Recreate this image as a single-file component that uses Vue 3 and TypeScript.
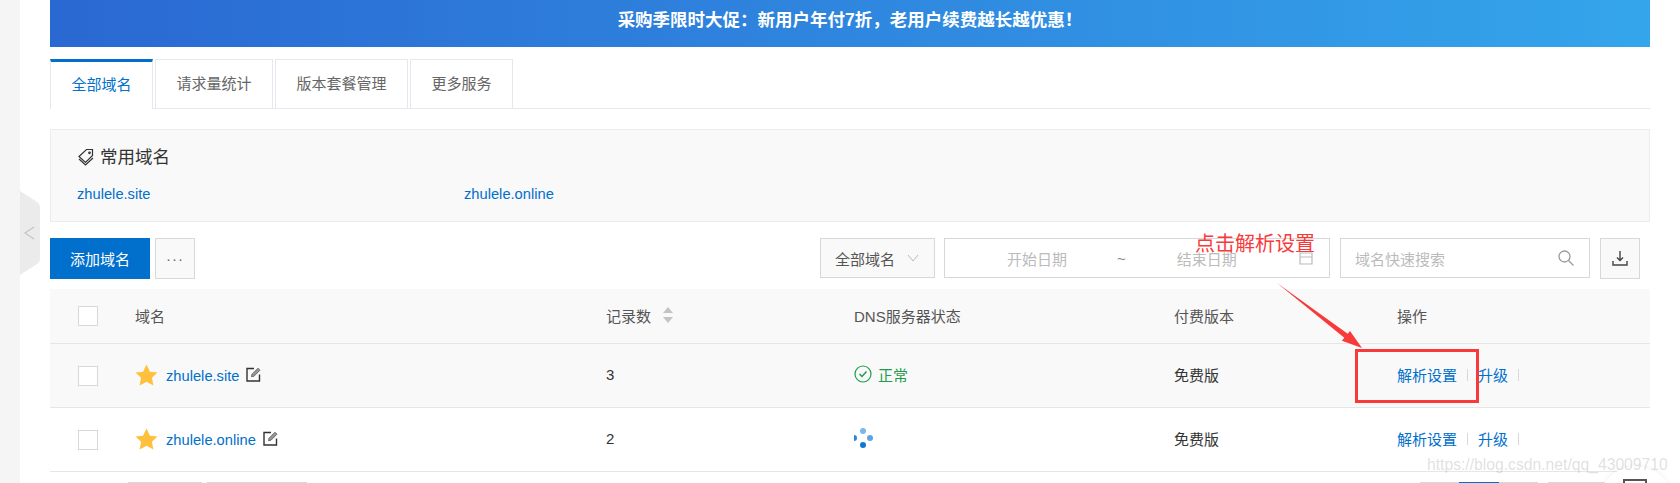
<script setup lang="ts">
interface Row { name: string; count: number; ok: boolean; striped: boolean }
const tabs: string[] = ['全部域名', '请求量统计', '版本套餐管理', '更多服务']
const rows: Row[] = [
  { name: 'zhulele.site', count: 3, ok: true, striped: true },
  { name: 'zhulele.online', count: 2, ok: false, striped: false },
]
</script>

<template>
  <div class="page">
    <aside class="sidebar"></aside>
    <svg class="handle" width="20" height="84" viewBox="0 0 20 84">
      <path d="M0 0L17 11Q20 13 20 17V67Q20 71 17 73L0 84Z" fill="#ebebeb" />
      <path d="M14 36L5 42L14 48" fill="none" stroke="#c4c4c4" stroke-width="1.2" />
    </svg>
    <main class="main">
      <div class="banner">采购季限时大促：新用户年付7折，老用户续费越长越优惠！</div>

      <nav class="tabs">
        <div v-for="(t, i) in tabs" :key="t" class="tab" :class="{ active: i === 0 }">{{ t }}</div>
      </nav>

      <section class="fav">
        <div class="fav-title">
          <svg width="18" height="18" viewBox="0 0 18 18" fill="none" stroke="#333" stroke-width="1.2">
            <path d="M2 8.5L9.5 1.5H15.5V7.5L8.5 14.5Z" />
            <path d="M2 11L8.5 17L16 10" />
            <circle cx="12.5" cy="4.8" r="0.8" />
          </svg>
          <span>常用域名</span>
        </div>
        <div class="fav-links">
          <a class="link domain fav-a">zhulele.site</a>
          <a class="link domain">zhulele.online</a>
        </div>
      </section>

      <div class="toolbar">
        <button class="btn-primary">添加域名</button>
        <button class="btn-more">···</button>
        <div class="spacer"></div>
        <div class="select">
          <span>全部域名</span>
          <svg width="12" height="8" viewBox="0 0 12 8" fill="none" stroke="#bbb" stroke-width="1"><path d="M1 1L6 7L11 1" /></svg>
        </div>
        <div class="date">
          <span class="ph d1">开始日期</span>
          <span class="tilde">~</span>
          <span class="ph d2">结束日期</span>
          <svg class="cal" width="14" height="13" viewBox="0 0 14 13" fill="none" stroke="#bbb" stroke-width="1.2"><path d="M1 1H13V12H1ZM1 5H13" /></svg>
        </div>
        <div class="search">
          <span class="ph">域名快速搜索</span>
          <svg width="18" height="18" viewBox="0 0 18 18" fill="none" stroke="#999" stroke-width="1.3"><circle cx="7.5" cy="7.5" r="5.5" /><path d="M11.5 11.5L16.5 16.5" /></svg>
        </div>
        <button class="btn-down">
          <svg width="16" height="16" viewBox="0 0 16 16" fill="none" stroke="#444" stroke-width="1.4"><path d="M8 1V10M5 7.5L8 10.5L11 7.5M1 11V15H15V11" /></svg>
        </button>
      </div>

      <div class="table">
        <div class="row head">
          <span class="check"></span>
          <span class="lift">域名</span>
          <span class="sort lift">记录数
            <svg width="10" height="16" viewBox="0 0 10 16" fill="#c4c4c4"><path d="M5 0L10 6H0ZM5 16L0 10H10Z" /></svg>
          </span>
          <span class="lift">DNS服务器状态</span>
          <span class="lift">付费版本</span>
          <span class="lift">操作</span>
        </div>
        <div v-for="r in rows" :key="r.name" class="row body" :class="{ striped: r.striped }">
          <span class="check"></span>
          <span class="name">
            <svg class="star" width="23" height="22" viewBox="0 0 24 23"><path d="M12 0.5L15.6 8L23.5 9L17.7 14.5L19.2 22.5L12 18.5L4.8 22.5L6.3 14.5L0.5 9L8.4 8Z" fill="#ffc03d" /></svg>
            <a class="link domain">{{ r.name }}</a>
            <svg class="edit" width="15" height="15" viewBox="0 0 15 15" fill="none" stroke="#333" stroke-width="1.4"><path d="M8 1.5H1V14H13.5V7.5" /><path d="M5.5 9.7L6 7.3L12 1.2L14 3.2L8 9.2Z" fill="#999" stroke="#555" stroke-width="0.8" /></svg>
          </span>
          <span class="num lift">{{ r.count }}</span>
          <span v-if="r.ok" class="ok">
            <svg width="18" height="18" viewBox="0 0 18 18" fill="none" stroke="#1f9d4d" stroke-width="1.2"><circle cx="9" cy="9" r="8" /><path d="M5.5 9L8 11.5L12.5 6.5" stroke-width="1.5" /></svg>
            正常
          </span>
          <span v-else class="dots">
            <i class="dot a"></i><i class="dot b"></i><i class="dot c"></i><i class="dot d"></i>
          </span>
          <span class="cell lift">免费版</span>
          <span class="ops lift">
            <a class="link">解析设置</a><i class="sep"></i><a class="link">升级</a><i class="sep"></i>
          </span>
        </div>
      </div>

      <div class="footer">
        <div class="foot-left"><span class="fb w1"></span><span class="fb w2"></span></div>
        <div class="foot-right"><span class="fb w3"></span><span class="fb blue"></span><span class="fb w3"></span><span class="fb w4"></span></div>
      </div>
    </main>

    <div class="float-circle"><span class="float-icon"></span></div>

    <div class="note">点击解析设置</div>
    <svg class="arrow" width="90" height="72" viewBox="0 0 90 72">
      <path d="M3 2L73.7 52.8L76 49.9L88 67L67.9 59.7L70.3 56.7Z" fill="#f83a3a" />
    </svg>
    <div class="redbox"></div>
    <div class="watermark">https://blog.csdn.net/qq_43009710</div>
  </div>
</template>

<style>
html, body { margin: 0; background: #fff; overflow: hidden; }
</style>

<style scoped>
.page {
  position: relative;
  display: flex;
  width: 1680px;
  height: 483px;
  overflow: hidden;
  background: #fff;
  font-family: "Liberation Sans", "Noto Sans CJK SC", sans-serif;
  font-size: 15px;
  color: #333;
}
.sidebar { width: 20px; background: #f5f5f5; flex: none; }
.handle { position: absolute; left: 20px; top: 191px; }
.main { margin-left: 30px; width: 1600px; flex: none; }
.banner {
  height: 47px;
  line-height: 41px;
  text-align: center;
  color: #fff;
  font-size: 17.5px;
  font-weight: 700;
  background: linear-gradient(90deg, #2a68d2, #34a5eb);
}
.tabs {
  display: flex;
  gap: 2px;
  height: 49px;
  margin-top: 12px;
  border-bottom: 1px solid #e5e8ed;
}
.tab {
  box-sizing: border-box;
  height: 49px;
  line-height: 47px;
  padding: 0 20.5px;
  border: 1px solid #e5e8ed;
  border-bottom: 0;
  color: #666;
  white-space: nowrap;
}
.tab.active {
  height: 50px;
  width: 103px;
  color: #0070cc;
  border-top: 3px solid #0070cc;
  border-left: 1px solid #e5e8ed;
  background: #fff;
  line-height: 45px;
}
.fav {
  box-sizing: border-box;
  height: 93px;
  margin-top: 20px;
  padding: 14px 26px;
  background: #f9f9f9;
  border: 1px solid #ececec;
}
.fav-title {
  display: flex;
  align-items: center;
  gap: 5px;
  font-size: 17.5px;
  color: #333;
  line-height: 26px;
}
.fav-links { display: flex; margin-top: 14px; line-height: 20px; }
.fav-a { width: 387px; }
.link { color: #0070cc; text-decoration: none; }
.domain { font-size: 14.7px; }
.toolbar {
  display: flex;
  align-items: center;
  height: 42px;
  margin-top: 15px;
}
button { font-family: inherit; font-size: 15px; box-sizing: border-box; }
.btn-primary {
  width: 100px;
  height: 41px;
  border: 0;
  background: #0070cc;
  color: #fff;
}
.btn-more {
  width: 40px;
  height: 41px;
  margin-left: 5px;
  border: 1px solid #d8d8d8;
  background: #f9f9f9;
  color: #666;
  letter-spacing: 1px;
}
.spacer { flex: 1; }
.select {
  box-sizing: border-box;
  display: flex;
  align-items: center;
  justify-content: space-between;
  width: 115px;
  height: 40px;
  padding: 0 15px 0 14px;
  border: 1px solid #d8d8d8;
  background: #f9f9f9;
  color: #555;
}
.date {
  position: relative;
  box-sizing: border-box;
  display: flex;
  align-items: center;
  width: 386px;
  height: 40px;
  margin-left: 9px;
  border: 1px solid #d8d8d8;
}
.ph { color: #bbb; }
.d1 { margin-left: 62px; }
.tilde { margin-left: 50px; color: #888; }
.d2 { margin-left: 51px; }
.cal { margin-left: auto; margin-right: 16px; }
.search {
  box-sizing: border-box;
  display: flex;
  align-items: center;
  justify-content: space-between;
  width: 250px;
  height: 40px;
  margin-left: 10px;
  padding: 0 14px;
  border: 1px solid #d8d8d8;
}
.btn-down {
  display: flex;
  align-items: center;
  justify-content: center;
  width: 40px;
  height: 41px;
  margin-left: 10px;
  margin-right: 10px;
  border: 1px solid #d8d8d8;
  background: #f9f9f9;
}
.table { margin-top: 10px; }
.row {
  display: grid;
  grid-template-columns: 85px 471px 248px 320px 223px 253px;
  align-items: center;
  box-sizing: border-box;
  border-bottom: 1px solid #e6e6e6;
}
.head { height: 55px; background: #f9f9f9; color: #555; }
.body { height: 64px; }
.striped { background: #f9f9f9; }
.lift { margin-top: -2px; }
.check {
  box-sizing: border-box;
  width: 20px;
  height: 20px;
  margin-left: 28px;
  background: #fff;
  border: 1px solid #d8d8d8;
}
.sort { display: flex; align-items: center; gap: 12px; }
.name { display: flex; align-items: center; gap: 8px; }
.star { margin-top: -2px; }
.edit { margin-top: -2px; margin-left: -1px; }
.num, .cell { color: #333; }
.ok { display: flex; align-items: center; gap: 6px; color: #1f9d4d; margin-top: -3px; }
.dots { position: relative; display: block; width: 19px; height: 20px; margin-top: -4px; }
.dot { position: absolute; width: 6px; height: 6px; border-radius: 50%; }
.dot.a { left: 6px; top: 0; background: #7cb6ec; }
.dot.b { left: 13px; top: 7px; background: #5ba3e6; }
.dot.c { left: 6px; top: 14px; background: #0f78d6; }
.dot.d { left: 0; top: 7px; background: #2a87dc; width: 3px; border-radius: 0 3px 3px 0; }
.ops { display: flex; align-items: center; }
.sep { width: 1px; height: 12px; margin: 0 10px; background: #d8d8d8; }
.footer {
  display: flex;
  justify-content: space-between;
  margin-top: 10px;
  padding: 0 38px 0 78px;
}
.foot-left, .foot-right { display: flex; }
.foot-left { gap: 5px; }
.fb { display: block; height: 30px; border-top: 1px solid #d8d8d8; }
.w1 { width: 74px; }
.w2 { width: 100px; }
.w3 { width: 39px; }
.w4 { width: 64px; margin-left: 10px; }
.fb.blue { width: 40px; border-top: 2px solid #0070cc; }
.float-circle {
  position: absolute;
  left: 1598px;
  top: 466px;
  width: 76px;
  height: 76px;
  border-radius: 50%;
  background: #fff;
  box-shadow: 0 0 4px rgba(0, 0, 0, 0.08);
}
.float-icon {
  position: absolute;
  left: 25px;
  top: 13px;
  width: 20px;
  height: 20px;
  border: 2px solid #555;
}
.note {
  position: absolute;
  left: 1195px;
  top: 230px;
  color: #f83a3a;
  font-size: 20px;
  line-height: 28px;
  white-space: nowrap;
}
.arrow { position: absolute; left: 1274px; top: 281px; }
.redbox {
  position: absolute;
  left: 1355px;
  top: 349px;
  width: 124px;
  height: 54px;
  box-sizing: border-box;
  border: 3px solid #f83a3a;
}
.watermark {
  position: absolute;
  left: 1427px;
  top: 455px;
  font-family: "Liberation Sans", sans-serif;
  font-size: 15.7px;
  line-height: 20px;
  color: rgba(150, 150, 150, 0.3);
  white-space: nowrap;
}
</style>
